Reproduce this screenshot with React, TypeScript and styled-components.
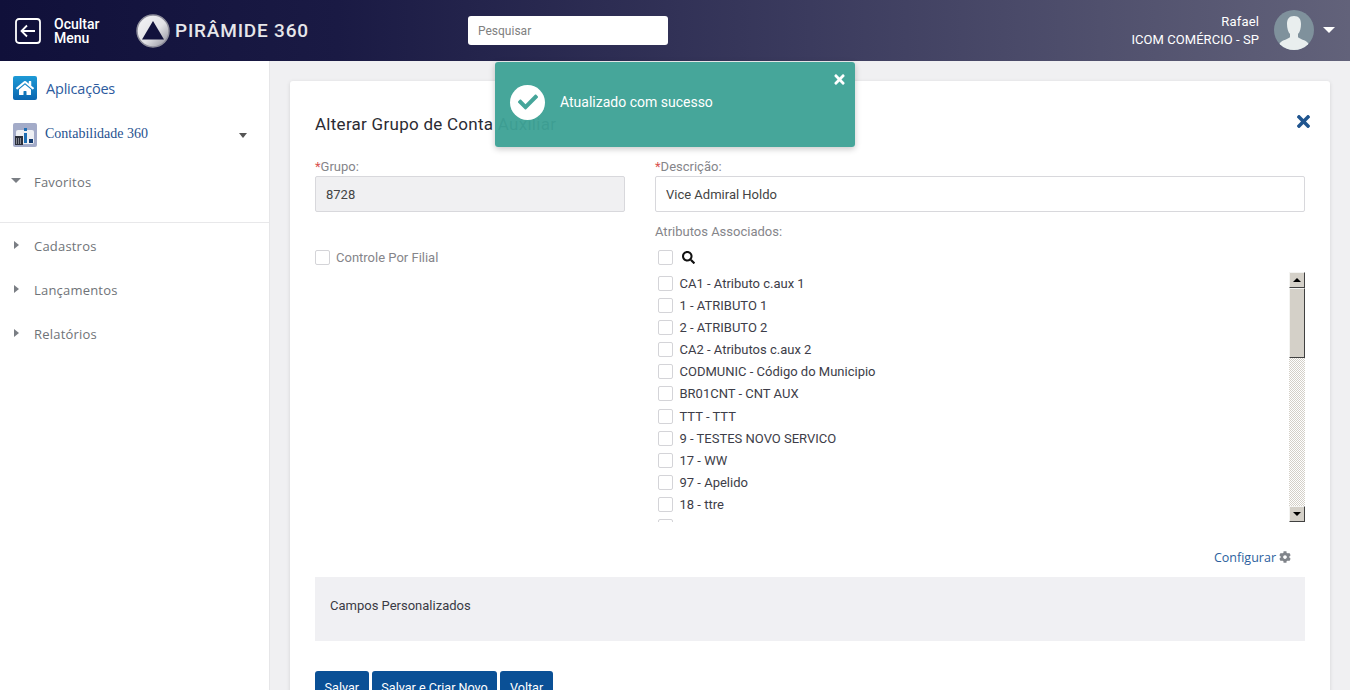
import React from 'react'
import styled, { createGlobalStyle } from 'styled-components'
import { FaCheck, FaCog, FaHome, FaSearch, FaTimes } from 'react-icons/fa'

const GlobalStyle = createGlobalStyle`
  html, body {
    margin: 0;
    padding: 0;
    height: 100%;
    overflow: hidden;
    background: #f0f0f2;
    font-family: Roboto, "Liberation Sans", sans-serif;
  }
`

const Shell = styled.div`
  width: 1350px;
  height: 690px;
  overflow: hidden;
  position: relative;
  display: flex;
  flex-direction: column;
`

const Header = styled.header`
  height: 61px;
  flex: none;
  display: flex;
  align-items: center;
  padding: 0 15px 0 15px;
  box-sizing: border-box;
  background: linear-gradient(90deg, #10103a 0%, #1a1a44 25%, #3b3b5e 60%, #62627a 100%);
  color: #fff;
`

const HideMenu = styled.div`
  display: flex;
  align-items: center;
  width: 121px;
  gap: 13px;
  font-size: 14px;
  font-weight: 500;
  line-height: 14px;
`

const Brand = styled.div`
  display: flex;
  align-items: center;
  gap: 5px;
  width: 332px;
  font-size: 19px;
  font-weight: 500;
  letter-spacing: 0.8px;
  color: #e6e6ea;
`

const SearchBox = styled.input`
  width: 200px;
  height: 29px;
  box-sizing: border-box;
  border: 0;
  border-radius: 3px;
  padding: 0 10px;
  font-family: Roboto, sans-serif;
  font-size: 12px;
  background: #fff;
  &::placeholder { color: #808080; opacity: 1; }
`

const UserArea = styled.div`
  margin-left: auto;
  display: flex;
  align-items: center;
`

const UserText = styled.div`
  text-align: right;
  font-size: 13px;
  line-height: 17px;
  margin-right: 15px;
  margin-top: -1px;
  letter-spacing: 0.05px;
  & > div:first-child { letter-spacing: 0.15px; margin-bottom: 1px; }
`

const Avatar = styled.div`
  width: 40px;
  height: 40px;
  border-radius: 50%;
  overflow: hidden;
  background: #7f919c;
  margin-right: 9px;
  margin-top: -1px;
`

const WhiteCaret = styled.span`
  width: 0;
  height: 0;
  border-left: 6.5px solid transparent;
  border-right: 6.5px solid transparent;
  border-top: 6px solid #fff;
  margin-top: -1px;
`

const Body = styled.div`
  flex: 1;
  display: flex;
  min-height: 0;
`

const Sidebar = styled.aside`
  width: 270px;
  flex: none;
  box-sizing: border-box;
  background: #fff;
  border-right: 1px solid #e6e6e8;
`

const AppRow = styled.div<{ $height: number }>`
  height: ${p => p.$height}px;
  display: flex;
  align-items: center;
  padding-left: 13px;
  gap: 9px;
  position: relative;
`

const IconTile = styled.div`
  width: 24px;
  height: 24px;
  border-radius: 2px;
  display: flex;
  align-items: center;
  justify-content: center;
  background: linear-gradient(180deg, #1e9ad6, #0a66b0);
  color: #fff;
  font-size: 18px;
`

const AppsLabel = styled.span`
  color: #2c5a9e;
  font-size: 14.5px;
  font-family: "Open Sans", sans-serif;
  letter-spacing: -0.2px;
`

const ContabLabel = styled.span`
  color: #1f5290;
  font-size: 14px;
  font-family: "Liberation Serif", serif;
  margin-top: -3px;
  margin-left: -1px;
`

const SmallCaret = styled.span`
  position: absolute;
  right: 22px;
  top: 18px;
  width: 0;
  height: 0;
  border-left: 4.5px solid transparent;
  border-right: 4.5px solid transparent;
  border-top: 5px solid #555;
`

const MenuSection = styled.div<{ $divider?: boolean }>`
  padding-top: ${p => (p.$divider ? '1px' : '5px')};
  height: ${p => (p.$divider ? 'auto' : '62px')};
  border-bottom: ${p => (p.$divider ? '0' : '1px solid #e8e8ea')};
`

const MenuRow = styled.div`
  height: 44px;
  display: flex;
  align-items: center;
  padding-left: 12px;
  gap: 13px;
  color: #6f7378;
  font-family: "Open Sans", sans-serif;
  font-size: 13px;
  letter-spacing: 0.2px;
`

const Arrow = styled.span<{ $open?: boolean }>`
  width: 9px;
  display: flex;
  margin-top: -3px;
  &::before {
    content: '';
    width: 0;
    height: 0;
    ${p => p.$open
      ? 'margin-left: -1px; border-left: 5px solid transparent; border-right: 5px solid transparent; border-top: 5px solid #7a7e84;'
      : 'margin-left: 2px; border-top: 4.5px solid transparent; border-bottom: 4.5px solid transparent; border-left: 5px solid #7a7e84;'}
  }
`

const Main = styled.main`
  flex: 1;
  padding: 20px 20px 0;
  min-width: 0;
  background: #f0f0f2;
`

const Card = styled.section`
  background: #fff;
  border-radius: 3px;
  box-shadow: 0 1px 4px rgba(0, 0, 0, 0.12);
  padding: 0 25px;
  height: 660px;
  position: relative;
`

const TitleRow = styled.div`
  height: 78px;
  display: flex;
  align-items: center;
  padding-top: 7px;
  box-sizing: border-box;
  justify-content: space-between;
`

const Title = styled.h1`
  margin: 0;
  font-size: 17px;
  font-weight: 400;
  color: #2b2b33;
  letter-spacing: 0.27px;
`

const CloseButton = styled.span`
  color: #20558f;
  font-size: 19px;
  display: flex;
  margin-top: -5px;
  margin-right: -8px;
`

const FormGrid = styled.div`
  display: grid;
  grid-template-columns: 310px 650px;
  column-gap: 30px;
`

const Label = styled.label`
  display: block;
  color: #85858a;
  font-size: 13px;
  line-height: 15px;
  margin-bottom: 2px;
  height: 15px;
  & b { color: #d9534f; font-weight: 400; }
`

const TextField = styled.input`
  display: block;
  width: 100%;
  height: 36px;
  box-sizing: border-box;
  border: 1px solid #d8d8dc;
  border-radius: 2px;
  padding: 0 10px;
  font-family: Roboto, sans-serif;
  font-size: 13px;
  color: #444;
  background: ${p => (p.readOnly ? '#f0f0f2' : '#fff')};
`

const LeftColumn = styled.div`
  padding-top: 0;
`

const RightColumn = styled.div``

const FilialRow = styled.div`
  display: flex;
  align-items: center;
  gap: 6px;
  margin-top: 38px;
  color: #85858a;
  font-size: 13px;
`

const Box = styled.span`
  width: 13px;
  height: 13px;
  flex: none;
  border: 1px solid #d4d4d8;
  border-radius: 2px;
  background: #fff;
  display: inline-block;
`

const AssocLabel = styled(Label)`
  margin-top: 12px;
  margin-bottom: 0;
`

const ListHeader = styled.div`
  height: 27px;
  display: flex;
  align-items: center;
  gap: 9px;
  padding-left: 3px;
  margin-top: 5px;
  margin-bottom: 1px;
  font-size: 13px;
  color: #111;
`

const ListWrap = styled.div`
  display: flex;
  height: 250px;
`

const List = styled.div`
  flex: 1;
  overflow: hidden;
`

const ListItem = styled.div`
  height: 22.17px;
  display: flex;
  align-items: center;
  gap: 6.5px;
  padding-left: 3px;
  color: #3d3d48;
  font-size: 13px;
  white-space: nowrap;
`

const ScrollBar = styled.div`
  width: 16px;
  flex: none;
  display: flex;
  flex-direction: column;
  background: repeating-conic-gradient(#d4d0c8 0% 25%, #fff 0% 50%) 0 0 / 2px 2px;
`

const ScrollButton = styled.div<{ $up?: boolean }>`
  height: 16px;
  box-sizing: border-box;
  flex: none;
  display: flex;
  align-items: center;
  justify-content: center;
  background: #d4d0c8;
  border: 1px solid;
  border-color: #f4f4f2 #404040 #404040 #f4f4f2;
  &::before {
    content: '';
    width: 0;
    height: 0;
    border-left: 4px solid transparent;
    border-right: 4px solid transparent;
    ${p => (p.$up ? 'border-bottom: 4px solid #000;' : 'border-top: 4px solid #000;')}
  }
`

const ScrollThumb = styled.div`
  height: 70px;
  box-sizing: border-box;
  flex: none;
  background: #d4d0c8;
  border: 1px solid;
  border-color: #f4f4f2 #404040 #404040 #f4f4f2;
`

const ScrollTrack = styled.div`
  flex: 1;
`

const ConfigRow = styled.div`
  display: flex;
  justify-content: flex-end;
  align-items: center;
  gap: 3px;
  height: 28px;
  margin-top: 21px;
  padding-right: 14px;
  color: #2c5f9e;
  font-family: "Open Sans", sans-serif;
  font-size: 12.5px;
  & svg { color: #80848a; font-size: 12px; }
`

const CustomFields = styled.div`
  height: 64px;
  margin-top: 6px;
  box-sizing: border-box;
  padding: 21px 15px 0;
  background: #f0f0f3;
  color: #3a3a44;
  font-size: 13px;
  line-height: 16px;
`

const Actions = styled.div`
  display: flex;
  gap: 3px;
  margin-top: 30px;
`

const ActionButton = styled.button`
  height: 32px;
  padding: 0 9.6px;
  border: 0;
  border-radius: 3px;
  background: #0a5096;
  color: #fff;
  font-family: Roboto, sans-serif;
  font-size: 12.6px;
`

const Toast = styled.div`
  position: absolute;
  left: 495px;
  top: 62px;
  width: 360px;
  height: 85px;
  box-sizing: border-box;
  border-radius: 3px;
  background: rgba(62, 162, 150, 0.96);
  box-shadow: 0 2px 6px rgba(0, 0, 0, 0.22);
  color: #fff;
  display: flex;
  align-items: center;
  padding: 0 15px 5px;
  gap: 15px;
  font-size: 14px;
`

const ToastIcon = styled.span`
  width: 35px;
  height: 35px;
  border-radius: 50%;
  background: #fff;
  color: #45a59a;
  display: flex;
  align-items: center;
  justify-content: center;
  font-size: 20px;
`

const ToastClose = styled.span`
  position: absolute;
  right: 8px;
  top: 10px;
  display: flex;
  font-size: 15px;
`

const attributes = [
  'CA1 - Atributo c.aux 1',
  '1 - ATRIBUTO 1',
  '2 - ATRIBUTO 2',
  'CA2 - Atributos c.aux 2',
  'CODMUNIC - Código do Municipio',
  'BR01CNT - CNT AUX',
  'TTT - TTT',
  '9 - TESTES NOVO SERVICO',
  '17 - WW',
  '97 - Apelido',
  '18 - ttre',
  '51 - Tipo',
]

const BackIcon = () => (
  <svg width="26" height="26" viewBox="0 0 26 26" fill="none" stroke="#fff" strokeWidth="1.8">
    <rect x="1" y="1" width="24" height="24" rx="3" />
    <path d="M20 13H6.5M12 7.5L6.5 13l5.5 5.5" />
  </svg>
)

const PyramidLogo = () => (
  <svg width="34" height="34" viewBox="0 0 34 34">
    <defs>
      <linearGradient id="ring" x1="0" y1="0" x2="1" y2="1">
        <stop offset="0" stopColor="#f4f4f6" />
        <stop offset="0.55" stopColor="#e2e2e6" />
        <stop offset="1" stopColor="#8a8a96" />
      </linearGradient>
    </defs>
    <circle cx="17" cy="17" r="16" fill="url(#ring)" stroke="#8f8f9c" strokeWidth="1.5" />
    <path d="M17 7L28 25.5H6z" fill="#12123c" />
  </svg>
)

const AvatarFigure = () => (
  <svg width="40" height="40" viewBox="0 0 40 40">
    <path
      d="M20 6c-5 0-7 3-7 8 0 4 1 8 3 10v3c-1 2-8 3-10 6-1 1-1 4-1 7h30c0-3 0-6-1-7-2-3-9-4-10-6v-3c2-2 3-6 3-10 0-5-2-8-7-8z"
      fill="#e9eeee"
    />
  </svg>
)

const ContabIcon = () => (
  <svg width="24" height="24" viewBox="0 0 24 24">
    <rect width="24" height="24" rx="2" fill="#a3abc8" />
    <rect x="3" y="7" width="18" height="14" rx="2" fill="#eef0f4" />
    <rect x="11" y="5" width="3" height="3" fill="#1e6fb4" />
    <rect x="11" y="10" width="3" height="10" fill="#1e6fb4" />
    <rect x="16" y="16" width="4" height="4" fill="#123a6e" />
    <rect x="2" y="13" width="8" height="9" fill="#2b2f3a" />
    <path d="M3 16h6M3 18h6M3 20h6" stroke="#dfe2e8" strokeWidth="1" strokeDasharray="1 1" />
  </svg>
)

const App: React.FC = () => {
  return (
    <Shell>
      <GlobalStyle />
      <Header>
        <HideMenu>
          <BackIcon />
          <span>Ocultar<br />Menu</span>
        </HideMenu>
        <Brand>
          <PyramidLogo />
          <span>PIRÂMIDE 360</span>
        </Brand>
        <SearchBox placeholder="Pesquisar" />
        <UserArea>
          <UserText>
            <div>Rafael</div>
            <div>ICOM COMÉRCIO - SP</div>
          </UserText>
          <Avatar><AvatarFigure /></Avatar>
          <WhiteCaret />
        </UserArea>
      </Header>
      <Body>
        <Sidebar>
          <AppRow $height={54}>
            <IconTile><FaHome /></IconTile>
            <AppsLabel>Aplicações</AppsLabel>
          </AppRow>
          <AppRow $height={40}>
            <ContabIcon />
            <ContabLabel>Contabilidade 360</ContabLabel>
            <SmallCaret />
          </AppRow>
          <MenuSection>
            <MenuRow><Arrow $open />Favoritos</MenuRow>
          </MenuSection>
          <MenuSection $divider>
            <MenuRow><Arrow />Cadastros</MenuRow>
            <MenuRow><Arrow />Lançamentos</MenuRow>
            <MenuRow><Arrow />Relatórios</MenuRow>
          </MenuSection>
        </Sidebar>
        <Main>
          <Card>
            <TitleRow>
              <Title>Alterar Grupo de Conta Auxiliar</Title>
              <CloseButton><FaTimes /></CloseButton>
            </TitleRow>
            <FormGrid>
              <LeftColumn>
                <Label><b>*</b>Grupo:</Label>
                <TextField readOnly value="8728" />
                <FilialRow><Box />Controle Por Filial</FilialRow>
              </LeftColumn>
              <RightColumn>
                <Label><b>*</b>Descrição:</Label>
                <TextField value="Vice Admiral Holdo" onChange={() => undefined} />
                <AssocLabel>Atributos Associados:</AssocLabel>
                <ListHeader>
                  <Box />
                  <FaSearch />
                </ListHeader>
                <ListWrap>
                  <List>
                    {attributes.map(item => (
                      <ListItem key={item}><Box />{item}</ListItem>
                    ))}
                  </List>
                  <ScrollBar>
                    <ScrollButton $up />
                    <ScrollThumb />
                    <ScrollTrack />
                    <ScrollButton />
                  </ScrollBar>
                </ListWrap>
              </RightColumn>
            </FormGrid>
            <ConfigRow>Configurar <FaCog /></ConfigRow>
            <CustomFields>Campos Personalizados</CustomFields>
            <Actions>
              <ActionButton>Salvar</ActionButton>
              <ActionButton>Salvar e Criar Novo</ActionButton>
              <ActionButton>Voltar</ActionButton>
            </Actions>
          </Card>
        </Main>
      </Body>
      <Toast>
        <ToastIcon><FaCheck /></ToastIcon>
        <span>Atualizado com sucesso</span>
        <ToastClose><FaTimes /></ToastClose>
      </Toast>
    </Shell>
  )
}

export default App
